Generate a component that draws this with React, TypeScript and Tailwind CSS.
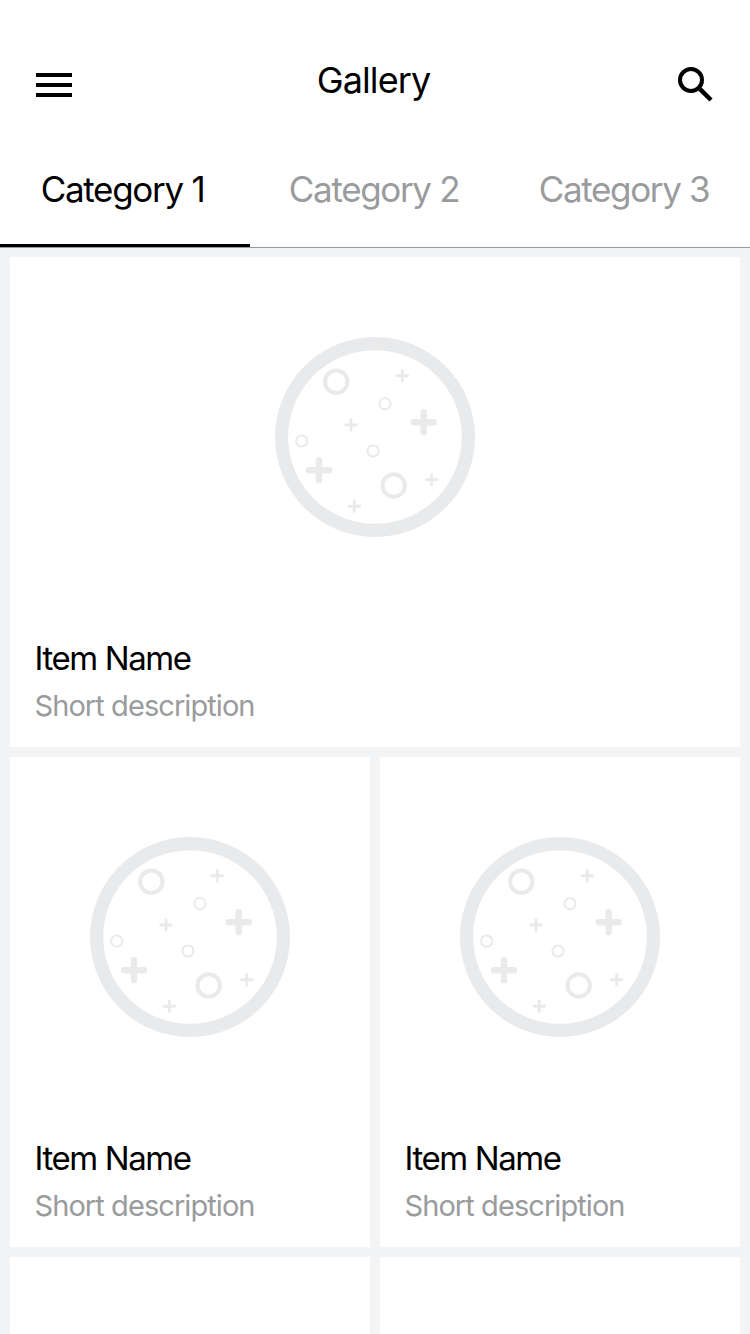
const INK = '#e9eaec';

const bigRings = [[61.3, 44.7], [118.7, 148.5]];
const smallRings = [[110, 66.7], [26.7, 104], [98, 114]];
const smallPluses = [[127.3, 38.7], [76, 88], [156.7, 142.7], [79.3, 169.3]];
const bigPluses = [[148.7, 85.3], [44, 133.3]];

function Moon() {
  return (
    <svg viewBox="0 0 200 200" className="size-[200px]" fill="none" stroke={INK} strokeLinecap="round">
      <circle cx="100" cy="100" r="93.4" strokeWidth="13.2" />
      {bigRings.map(([x, y]) => (
        <circle key={x} cx={x} cy={y} r="11.2" strokeWidth="4" />
      ))}
      {smallRings.map(([x, y]) => (
        <circle key={x} cx={x} cy={y} r="5.6" strokeWidth="2" />
      ))}
      {smallPluses.map(([x, y]) => (
        <path key={x} d={`M${x - 5.3} ${y}h10.6M${x} ${y - 5.3}v10.6`} strokeWidth="2.9" />
      ))}
      {bigPluses.map(([x, y]) => (
        <path key={x} d={`M${x - 10} ${y}h20M${x} ${y - 10}v20`} strokeWidth="6.4" />
      ))}
    </svg>
  );
}

function Card({ wide = false }: { wide?: boolean }) {
  return (
    <article className={`flex h-[490px] flex-col bg-white ${wide ? 'col-span-2' : ''}`}>
      <div className="flex justify-center pt-20">
        <Moon />
      </div>
      <div className="pt-[101px] pl-[24.5px]">
        <h2 className="text-[33px] leading-10 tracking-[-1.4px] text-black">Item Name</h2>
        <p className="mt-2.5 text-[29px] leading-9 tracking-[-0.93px] text-[#999b9d]">Short description</p>
      </div>
    </article>
  );
}

function Header() {
  return (
    <header className="flex h-[138px] shrink-0 items-start justify-between px-9 pt-[60px]">
      <button aria-label="Menu" className="mt-[13px] flex w-9 flex-col gap-1.5">
        <span className="h-1 bg-black" />
        <span className="h-1 bg-black" />
        <span className="h-1 bg-black" />
      </button>
      <h1 className="pr-[3px] text-[36px] leading-10 tracking-[-0.9px] text-black">Gallery</h1>
      <button aria-label="Search" className="mt-1.5">
        <svg viewBox="0 0 36 36" className="size-9" fill="none" stroke="#000">
          <circle cx="13" cy="14" r="11" strokeWidth="4" />
          <path d="M22 23.2L33 34" strokeWidth="4.5" />
        </svg>
      </button>
    </header>
  );
}

const tabs = ['Category 1', 'Category 2', 'Category 3'];

function Tabs() {
  return (
    <nav className="grid h-[110px] shrink-0 grid-cols-3 border-b border-[#979a9b]">
      {tabs.map((tab, i) => (
        <button
          key={tab}
          className={`flex justify-center border-b-[3px] pt-[31px] text-[35px] leading-10 ${
            i === 0
              ? 'border-black pr-[5px] tracking-[-1.3px] text-black'
              : 'border-transparent pr-[2px] tracking-[-1.35px] text-[#999b9d]'
          }`}
        >
          {tab}
        </button>
      ))}
    </nav>
  );
}

export default function App() {
  return (
    <div className="flex h-[1334px] w-[750px] flex-col overflow-hidden bg-white font-['Inter','Liberation_Sans',sans-serif]">
      <Header />
      <Tabs />
      <main className="grid grow grid-cols-2 gap-2.5 bg-[#f3f4f6] px-2.5 pt-[9px]">
        <Card wide />
        <Card />
        <Card />
        <div className="h-[77px] bg-white" />
        <div className="h-[77px] bg-white" />
      </main>
    </div>
  );
}
